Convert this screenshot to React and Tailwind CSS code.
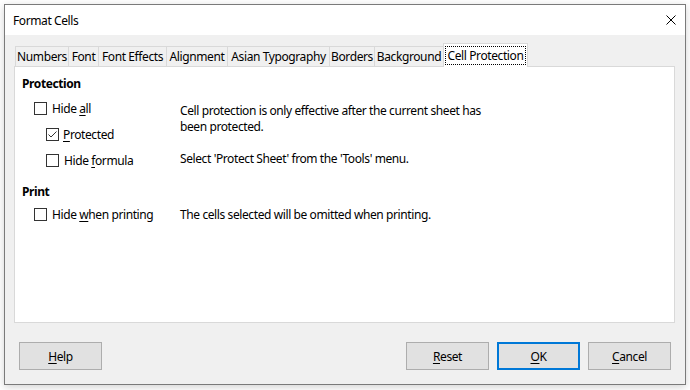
import React from "react";

const font = { fontFamily: '"Noto Sans", "Open Sans", sans-serif' };

function Box({ checked }) {
  return (
    <span className="w-[13px] h-[13px] border border-[#333333] bg-white flex items-center justify-center shrink-0">
      {checked && (
        <svg width="11" height="11" viewBox="0 0 11 11">
          <polyline points="1.5,5.5 4,8 9.5,2.5" fill="none" stroke="#333333" strokeWidth="1" />
        </svg>
      )}
    </span>
  );
}

function Tab({ w, children }) {
  return (
    <div className={`${w} h-[20px] border-t border-l border-[#d9d9d9] flex justify-center items-start pt-[2px] whitespace-nowrap`}>
      {children}
    </div>
  );
}

function Btn({ children, ok }) {
  return (
    <div
      className={`w-[83px] h-[28px] bg-[#e1e1e1] flex items-center justify-center pt-[1px] ${ok ? "border-2 border-[#0078d7]" : "border border-[#adadad]"}`}
    >
      {children}
    </div>
  );
}

const U = ({ children }) => <span className="underline underline-offset-[2px]">{children}</span>;

export default function App() {
  return (
    <div className="w-[690px] h-[390px] bg-white pt-[4px] pl-[4px] text-[12px] leading-[16px] tracking-[-0.4px] text-black" style={font}>
      <div className="w-[682px] h-[381px] border border-[#7a7a7a] flex flex-col shadow-[0_2px_8px_rgba(0,0,0,0.18)]">
        <div className="h-[30px] bg-white flex items-center justify-between pl-[8px] pr-[9px] shrink-0">
          <span className="pt-[1px]">Format Cells</span>
          <svg width="10" height="10" viewBox="0 0 10 10">
            <path d="M0.5 0.5 L9.5 9.5 M9.5 0.5 L0.5 9.5" stroke="#000" strokeWidth="1" />
          </svg>
        </div>
        <div className="flex-1 bg-[#f0f0f0] flex flex-col">
          <div className="mt-[8px] pl-[10px] h-[23px] flex items-end">
            <Tab w="w-[53px]">Numbers</Tab>
            <Tab w="w-[30px]">Font</Tab>
            <Tab w="w-[68px]">Font Effects</Tab>
            <Tab w="w-[61px]">Alignment</Tab>
            <Tab w="w-[102px]">Asian Typography</Tab>
            <Tab w="w-[45px]">Borders</Tab>
            <Tab w="w-[69px]">Background</Tab>
            <div className="relative z-10 w-[85px] h-[24px] -mb-px bg-white border-t border-l border-r border-[#d9d9d9] pt-[2px] px-[1px] whitespace-nowrap">
              <div className="h-[19px] border border-dotted border-black flex items-center justify-center pt-[1px]">Cell Protection</div>
            </div>
          </div>
          <div className="ml-[9px] w-[661px] h-[257px] border border-[#d9d9d9] bg-white flex shrink-0">
            <div className="w-[165px] flex flex-col whitespace-nowrap">
              <div className="mt-[9px] pl-[7px] h-[16px] font-bold">Protection</div>
              <div className="mt-[8px] pl-[19px] h-[16px] flex items-center gap-[5px]">
                <Box />
                <span className="pt-[1px]">Hide <U>a</U>ll</span>
              </div>
              <div className="mt-[10px] pl-[31px] h-[16px] flex items-center gap-[4px]">
                <Box checked />
                <span className="pt-[1px]"><U>P</U>rotected</span>
              </div>
              <div className="mt-[10px] pl-[31px] h-[16px] flex items-center gap-[5px]">
                <Box />
                <span className="pt-[1px]">Hide <U>f</U>ormula</span>
              </div>
              <div className="mt-[16px] pl-[7px] h-[16px] font-bold">Print</div>
              <div className="mt-[6px] pl-[19px] h-[16px] flex items-center gap-[5px]">
                <Box />
                <span className="pt-[1px]">Hide <U>w</U>hen printing</span>
              </div>
            </div>
            <div className="flex flex-col whitespace-nowrap">
              <div className="mt-[36px]">
                Cell protection is only effective after the current sheet has
                <br />
                been protected.
              </div>
              <div className="mt-[16px]">Select 'Protect Sheet' from the 'Tools' menu.</div>
              <div className="mt-[40px]">The cells selected will be omitted when printing.</div>
            </div>
          </div>
          <div className="mt-[19px] pl-[14px] pr-[14px] flex justify-between">
            <Btn><U>H</U>elp</Btn>
            <div className="flex gap-[8px]">
              <Btn><U>R</U>eset</Btn>
              <Btn ok><U>O</U>K</Btn>
              <Btn><U>C</U>ancel</Btn>
            </div>
          </div>
        </div>
      </div>
    </div>
  );
}
